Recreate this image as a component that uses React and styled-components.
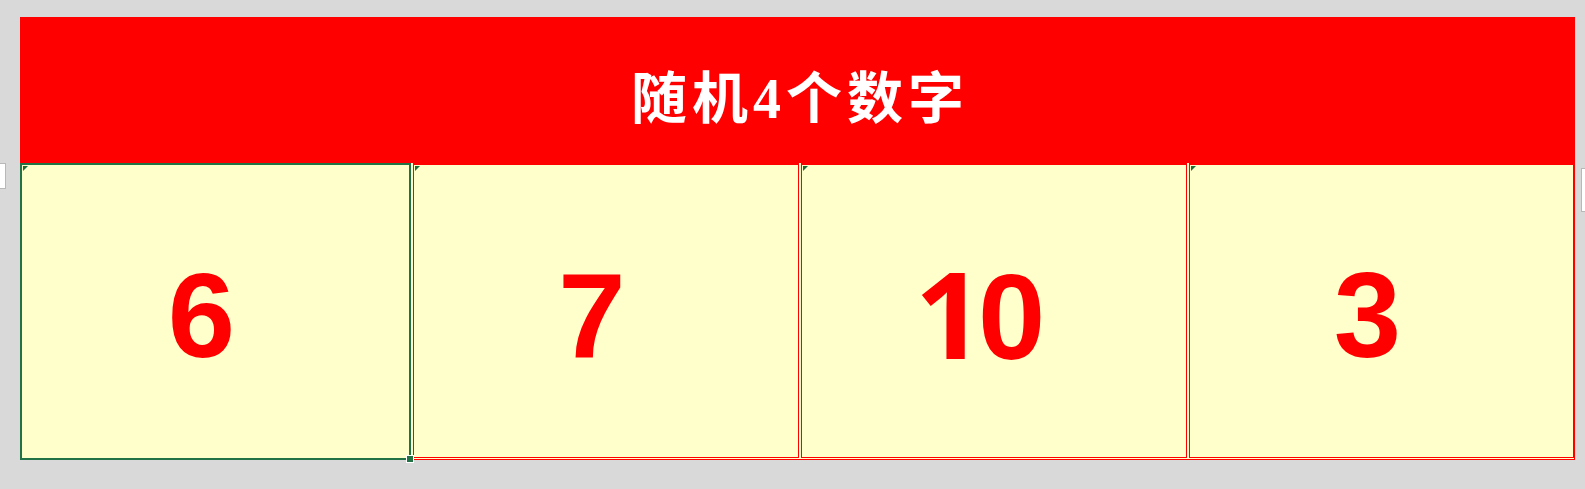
import React from 'react'
import styled, { createGlobalStyle } from 'styled-components'

const numbers = [6, 7, 10, 3]

const GlobalStyle = createGlobalStyle`
  html, body {
    margin: 0;
    padding: 0;
    background: #d9d9d9;
  }
`

const Page = styled.div`
  display: flex;
  align-items: flex-start;
  padding-top: 17px;
  width: 1585px;
  height: 489px;
  box-sizing: border-box;
`

const Stub = styled.div`
  width: ${p => p.w}px;
  height: ${p => p.h}px;
  margin-top: ${p => p.top}px;
  background: #ffffff;
  border: 1px solid #b8b8b8;
  border-left: ${p => (p.side === 'left' ? 'none' : '1px solid #b8b8b8')};
  border-right: ${p => (p.side === 'right' ? 'none' : '1px solid #b8b8b8')};
  box-sizing: border-box;
`

const Sheet = styled.div`
  display: flex;
  flex-direction: column;
  width: 1555px;
  margin: 0 ${p => p.gapRight}px 0 ${p => p.gapLeft}px;
`

const Header = styled.div`
  height: 146px;
  background: #ff0000;
  display: flex;
  align-items: center;
  justify-content: center;
  padding: 6px 0 0 5px;
  box-sizing: border-box;
  color: #ffffff;
  font-family: "Liberation Serif", "Noto Sans CJK SC", serif;
  font-weight: 700;
  font-size: 56px;
  letter-spacing: 5px;
`

const Row = styled.div`
  position: relative;
  display: grid;
  grid-template-columns: 391px 386px 386px 385px;
  column-gap: 2px;
  height: 296px;
  background: #ffffcc;
  border-right: 1px solid #ff0000;
  border-bottom: 1px solid #ff0000;
`

const Cell = styled.div`
  position: relative;
  display: flex;
  align-items: center;
  justify-content: center;
  box-sizing: border-box;
  padding: 8px 28px 0 0;
  height: ${p => (p.selected ? 297 : 295)}px;
  border: ${p => (p.selected ? '2px solid #217346' : '1px solid #ff0000')};
  border-top: 2px solid ${p => (p.selected ? '#217346' : '#ff0000')};
  background: #ffffcc;
  z-index: ${p => (p.selected ? 2 : 1)};

  &::before {
    content: '';
    position: absolute;
    top: 1px;
    left: 1px;
    width: 0;
    height: 0;
    border-top: 5px solid #1e6b3a;
    border-right: 5px solid transparent;
  }
`

const Value = styled.span`
  font-family: "Liberation Sans", Arial, sans-serif;
  font-weight: 700;
  font-size: 121px;
  line-height: 1;
  color: #ff0000;
`

const One = styled.span`
  font-family: "Noto Sans", Roboto, sans-serif;
  font-weight: 700;
  letter-spacing: -6px;
`

const Handle = styled.span`
  position: absolute;
  right: -5px;
  bottom: -5px;
  width: 6px;
  height: 6px;
  background: #217346;
  border: 1px solid #ffffff;
`

const renderNumber = (n) =>
  String(n).split('').map((ch, i) => (ch === '1' ? <One key={i}>1</One> : ch))

export default function App() {
  return (
    <>
      <GlobalStyle />
      <Page>
        <Stub side="left" w={6} h={26} top={146} />
        <Sheet gapLeft={14} gapRight={6}>
          <Header>随机4个数字</Header>
          <Row>
            {numbers.map((n, i) => (
              <Cell key={i} selected={i === 0}>
                <Value>{renderNumber(n)}</Value>
                {i === 0 && <Handle />}
              </Cell>
            ))}
          </Row>
        </Sheet>
        <Stub side="right" w={4} h={44} top={151} />
      </Page>
    </>
  )
}
